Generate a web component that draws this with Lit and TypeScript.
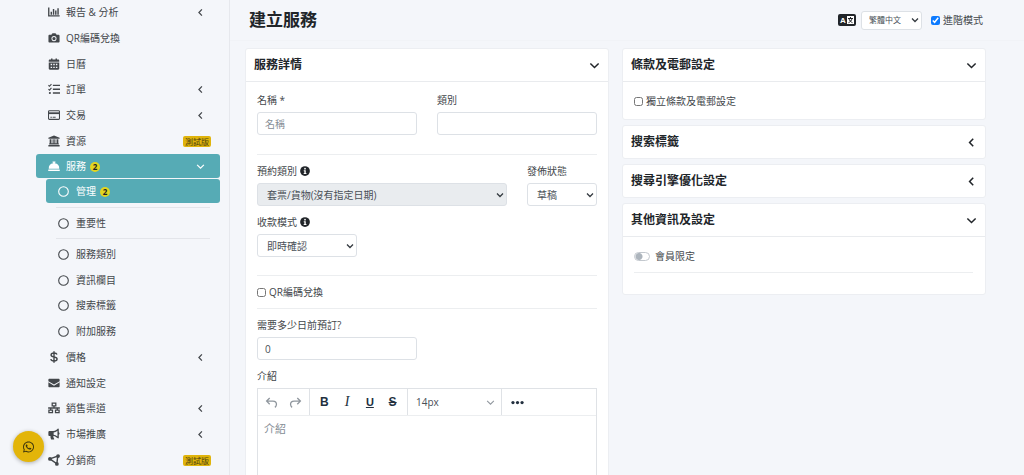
import { LitElement, html, svg, css, nothing } from "lit";
import { customElement, property, state } from "lit/decorators.js";

const icons: Record<string, unknown> = {
  chart: svg`<path d="M1 2v11.2h14.5" fill="none" stroke="currentColor" stroke-width="1.8"/><path d="M4.4 7.5v4M7.4 4v7.5M10.4 6v5.5M13.4 3v8.5" stroke="currentColor" stroke-width="1.9"/>`,
  camera: svg`<path fill-rule="evenodd" d="M2 3.8h2.6l.7-1.5c.2-.5.6-.8 1.1-.8h3.2c.5 0 .9.3 1.1.8l.7 1.5H14c.8 0 1.4.6 1.4 1.4v7.4c0 .8-.6 1.4-1.4 1.4H2c-.8 0-1.4-.6-1.4-1.4V5.2c0-.8.6-1.4 1.4-1.4zM8 5.4a3.4 3.4 0 1 0 0 6.8 3.4 3.4 0 0 0 0-6.8zm0 1.2a2.2 2.2 0 1 1 0 4.4 2.2 2.2 0 0 1 0-4.4z"/>`,
  calendar: svg`<path fill-rule="evenodd" d="M4 .5h2V2h4V.5h2V2h1.6c.8 0 1.4.6 1.4 1.4V5H1V3.4C1 2.6 1.6 2 2.4 2H4zM1 6h14v8.1c0 .8-.6 1.4-1.4 1.4H2.4c-.8 0-1.4-.6-1.4-1.4zm2.5 1.8v1.9h2V7.8zm3.5 0v1.9h2V7.8zm3.5 0v1.9h2V7.8zm-7 3.7v1.9h2v-1.9zm3.5 0v1.9h2v-1.9zm3.5 0v1.9h2v-1.9z"/>`,
  tasks: svg`<path d="M.6 3 2 4.4 4.6 1.4M.6 8.2 2 9.6l2.6-3" fill="none" stroke="currentColor" stroke-width="1.5"/><circle cx="2.5" cy="13.3" r="1.4"/><path d="M6.5 3.2H16M6.5 8.3H16M6.5 13.3H16" stroke="currentColor" stroke-width="1.8"/>`,
  card: svg`<rect x=".7" y="2.2" width="14.6" height="11.6" rx="1.2" fill="none" stroke="currentColor" stroke-width="1.4"/><path d="M1 5.6h14" stroke="currentColor" stroke-width="2.4"/><path d="M3.2 11h2M6.2 11h4" stroke="currentColor" stroke-width="1.3"/>`,
  bank: svg`<path d="M8 .6 15.5 3.5v1.4H.5V3.500zM2.200 5.600h2.400v5.400h1.500V5.600h3.800v5.400h1.500V5.600h2.400v5.400c.4 0 .7.300.7.700v1.100H1.500v-1.100c0-.4.300-.7.700-.7zM7.600 5.600v5.400h.8V5.600zM.5 13.400h15v1.900H.5z" fill-rule="evenodd"/>`,
  bell: svg`<path d="M.8 12.6h14.4c.4 0 .6.3.6.6v.7c0 .4-.3.6-.6.6H.8a.6.6 0 0 1-.6-.6v-.7c0-.3.2-.6.6-.6zM9 4.3V3.5h.5c.3 0 .5-.2.5-.5v-.5c0-.3-.2-.5-.5-.5h-3c-.3 0-.5.2-.5.5V3c0 .3.2.5.5.5H7v.8a7 7 0 0 0-6 7.2h14a7 7 0 0 0-6-7.2z"/>`,
  dollar: svg`<path d="M12 4.8C11.5 3.3 10 2.7 8 2.7c-2.3 0-3.9 1-3.9 2.6C4.1 9 12.1 7 12.1 10.7c0 1.7-1.7 2.7-4.1 2.7-2.2 0-3.9-.8-4.3-2.5M8 .3v15.4" fill="none" stroke="currentColor" stroke-width="1.9"/>`,
  mail: svg`<path d="M.5 5.5V3.8c0-.8.6-1.4 1.4-1.4h12.2c.8 0 1.4.6 1.4 1.4v1.7L8 10zM.5 7 8 11.6 15.5 7v5.3c0 .8-.6 1.4-1.4 1.4H1.9c-.8 0-1.4-.6-1.4-1.4z"/>`,
  network: svg`<path d="M5.6 1.5h4.8v3.6H5.6zM1.2 10.7H6v3.6H1.2zM10 10.7h4.8v3.6H10zM8 5v3M.2 8h15.6M3.6 8v2.5M12.4 8v2.5" fill="none" stroke="currentColor" stroke-width="1.7"/>`,
  horn: svg`<path fill-rule="evenodd" d="M13.5.8c.5 0 .9.4.9.9v4a1.9 1.9 0 0 1 0 3.4v4c0 .7-.8 1.2-1.4.7l-2-1.5a6.5 6.5 0 0 0-4-1.5c0 1.5.5 2.5 1.2 3.6.3.5 0 1-.6 1H4.8c-.3 0-.6-.2-.8-.5-.6-1.3-.9-2.700-.7-4.100H2.100C1.200 10.800.5 10.100.5 9.200V5.700c0-.9.7-1.600 1.600-1.600H7a6.500 6.500 0 0 0 4-1.500l2-1.600c.1-.1.3-.2.5-.2zM12.600 3.600 12.200 4A8.300 8.300 0 0 1 7.500 5.900v3.200a8.300 8.300 0 0 1 4.700 1.800l.4.300z"/>`,
  nodes: svg`<path d="M2.5 6.5 13 2.8 11.8 13z" fill="none" stroke="currentColor" stroke-width="1.9"/><circle cx="2.6" cy="6.6" r="2.5"/><circle cx="13.4" cy="2.8" r="2.5"/><circle cx="11.8" cy="13.3" r="2.5"/>`,
  circle: svg`<circle cx="8" cy="8" r="7" fill="none" stroke="currentColor" stroke-width="1.6"/>`,
  left: svg`<path d="M10.5 2.500 5.200 8l5.300 5.500" fill="none" stroke="currentColor" stroke-width="2.200"/>`,
  down: svg`<path d="M2 5.2 8 11l6-5.8" fill="none" stroke="currentColor" stroke-width="2.2"/>`,
  info: svg`<circle cx="8" cy="8" r="7.8"/><circle cx="8" cy="4.3" r="1.4" fill="#fff"/><path d="M6 6.8h3.2v4.4H10.3v1.5H5.9v-1.5H7V8.3H6z" fill="#fff"/>`,
  undo: svg`<path d="M5.8 2.5 2 6.3l3.8 3.8M2.2 6.3h7.600c2.700 0 4.300 1.700 4.300 4 0 1.500-.8 2.900-1.900 3.700" fill="none" stroke="currentColor" stroke-width="1.600"/>`,
  redo: svg`<path d="M10.200 2.500 14 6.300l-3.800 3.800M13.800 6.300H6.200c-2.700 0-4.300 1.700-4.300 4 0 1.500.8 2.900 1.900 3.700" fill="none" stroke="currentColor" stroke-width="1.600"/>`,
  thin: svg`<path d="M2 5 8 11l6-6" fill="none" stroke="currentColor" stroke-width="1.8"/>`,
  more: svg`<circle cx="2.4" cy="8" r="2"/><circle cx="8" cy="8" r="2"/><circle cx="13.6" cy="8" r="2"/>`,
};
const icon = (name: string, cls = "") =>
  html`<svg class="icon ${cls}" viewBox="0 0 16 16" fill="currentColor" aria-hidden="true">${icons[name]}</svg>`;

const shared = css`
  :host { font: 10px/16px "Open Sans", "Noto Sans CJK TC", sans-serif; color: #43474b; }
  *, *::before, *::after { box-sizing: border-box; }
  button, input, select, textarea { font: inherit; color: inherit; margin: 0; }
  .icon { width: 11px; height: 11px; flex: none; display: block; }
`;

interface Item { icon: string; text: string; more?: boolean; beta?: boolean; count?: number; active?: boolean; sub?: (Item | null)[] }

const menu: Item[] = [
  { icon: "chart", text: "報告 & 分析", more: true },
  { icon: "camera", text: "QR編碼兌換" },
  { icon: "calendar", text: "日曆" },
  { icon: "tasks", text: "訂單", more: true },
  { icon: "card", text: "交易", more: true },
  { icon: "bank", text: "資源", beta: true },
  {
    icon: "bell", text: "服務", count: 2, active: true,
    sub: [
      { icon: "circle", text: "管理", count: 2, active: true },
      null,
      { icon: "circle", text: "重要性" },
      null,
      { icon: "circle", text: "服務類別" },
      { icon: "circle", text: "資訊欄目" },
      { icon: "circle", text: "搜索標籤" },
      { icon: "circle", text: "附加服務" },
    ],
  },
  { icon: "dollar", text: "價格", more: true },
  { icon: "mail", text: "通知設定" },
  { icon: "network", text: "銷售渠道", more: true },
  { icon: "horn", text: "市場推廣", more: true },
  { icon: "nodes", text: "分銷商", beta: true },
];

@customElement("side-nav")
export class SideNav extends LitElement {
  static styles = [shared, css`
    :host { display: block; border-right: 1px solid #e6e8ed; padding: 0 9px 0 36px; overflow: hidden; }
    ul { list-style: none; margin: 0; padding: 0; display: flex; flex-direction: column; }
    li { margin-bottom: 2px; }
    li:nth-child(3n) { margin-bottom: 1px; }
    .sub { margin: 1px 0 0 10px; }
    .sub li:last-child { margin-bottom: 0; }
    .sub .divider { border-top: 1px solid #e3e5ea; margin: 2px 10px 3px; }
    .link { display: flex; align-items: center; height: 24px; padding: 0 9px 0 12px; border-radius: 3px; color: inherit; text-decoration: none; white-space: nowrap; }
    .link .lead { width: 12px; height: 12px; margin-right: 6px; }
    .sub .link .lead { width: 11px; height: 11px; margin-right: 7px; }
    .link.active { background: #56abb5; color: #fff; }
    .count { width: 10px; height: 10px; margin: 2px 0 0 4px; border-radius: 5px; background: #e3d51f; color: #222; font-weight: 700; font-size: 8px; line-height: 10px; text-align: center; }
    .arrow { width: 9px; height: 9px; margin: 0 6px 0 auto; }
    .beta { margin-left: auto; height: 11px; padding: 0 2px; border-radius: 2px; background: #e0b40c; color: #4b3f10; font-size: 8px; line-height: 11px; }
  `];
  private item(i: Item | null): unknown {
    if (!i) return html`<li class="divider" role="separator"></li>`;
    return html`<li>
      <a class="link ${i.active ? "active" : ""}" href="#">
        ${icon(i.icon, "lead")}<span>${i.text}</span>
        ${i.count ? html`<span class="count">${i.count}</span>` : nothing}
        ${i.beta ? html`<span class="beta">測試版</span>` : nothing}
        ${i.more ? icon("left", "arrow") : i.sub ? icon("down", "arrow") : nothing}
      </a>
      ${i.sub ? html`<ul class="sub">${i.sub.map((s) => this.item(s))}</ul>` : nothing}
    </li>`;
  }
  render() {
    return html`<nav><ul>${menu.map((i) => this.item(i))}</ul></nav>`;
  }
}

@customElement("panel-card")
export class PanelCard extends LitElement {
  @property() heading = "";
  @property({ type: Boolean }) open = false;
  static styles = [shared, css`
    :host { display: block; background: #fff; border: 1px solid #eceef2; border-radius: 3px; }
    h2 { margin: 0; font: inherit; }
    .head { display: flex; align-items: center; justify-content: space-between; width: 100%; height: 32px; padding: 0 8px; border: 0; background: none; color: #212529; font-size: 12px; font-weight: 700; text-align: left; }
    .open { height: 33px; border-bottom: 1px solid #e9ebee; }
  `];
  render() {
    return html`<h2><button class="head ${this.open ? "open" : ""}" aria-expanded=${this.open} @click=${() => (this.open = !this.open)}>
        <span>${this.heading}</span>${icon(this.open ? "down" : "left")}
      </button></h2>
      ${this.open ? html`<slot></slot>` : nothing}`;
  }
}

@customElement("app-root")
export class AppRoot extends LitElement {
  @state() private advanced = true;
  static styles = [shared, css`
    :host { display: grid; grid-template-columns: 230px minmax(0, 1fr); height: 100vh; overflow: hidden; background: #f4f6fa; }
    main { overflow-y: auto; scrollbar-width: none; }
    .top { display: flex; align-items: center; height: 41px; padding: 0 41px 0 19px; border-bottom: 1px solid #f1f3f7; }
    h1 { margin: 0 auto 0 0; font-size: 17px; line-height: 24px; font-weight: 700; color: #212529; }
    .lang { width: 18px; height: 12px; margin-right: 5px; }
    .columns { display: grid; grid-template-columns: 1fr 1fr; gap: 13px; align-items: start; padding: 7px 38px 20px 15px; }
    .stack { display: flex; flex-direction: column; gap: 5px; }
    .body { padding: 10px 11px; }
    .side { padding: 11px 12px 10px 11px; }
    .row { display: grid; grid-template-columns: 1fr 1fr; gap: 20px; margin-bottom: 19px; }
    .booking { grid-template-columns: 1fr 70px; margin-bottom: 8px; }
    .field { display: flex; flex-direction: column; align-items: flex-start; gap: 4px; }
    .last { margin-bottom: 18px; }
    .days { width: calc(50% - 10px); margin-bottom: 8px; }
    label { display: flex; align-items: center; gap: 3px; }
    .field .icon { width: 10px; height: 10px; color: #212529; display: inline-block; }
    .control { width: 100%; height: 23px; padding: 0 7px; border: 1px solid #dde1e6; border-radius: 3px; background-color: #fff; color: #495057; outline: none; }
    .control::placeholder, .area::placeholder { color: #868e96; opacity: 1; }
    select.control { appearance: none; padding: 0 16px 0 9px; background-image: url("data:image/svg+xml,%3Csvg xmlns='http://www.w3.org/2000/svg' viewBox='0 0 8 8'%3E%3Cpath d='M1 2.500 4 5.500 7 2.500' fill='none' stroke='%23343a40' stroke-width='1.300'/%3E%3C/svg%3E"); background-repeat: no-repeat; background-size: 8px 8px; background-position: right 2px center; }
    select.control:disabled { background-color: #e9ecef; opacity: 1; }
    select.pay { width: 100px; }
    select.locale { width: 61px; height: 19px; padding: 0 14px 0 7px; margin-right: 9px; font-size: 8px; line-height: 16px; }
    hr { border: 0; border-top: 1px solid #eceef0; margin: 0 0 8px; }
    .check { margin-bottom: 8px; }
    .solo { margin-bottom: 0; }
    .spaced { margin-bottom: 11px; }
    .check input, .top label input { width: 9px; height: 9px; accent-color: #0d7bff; }
    .check input.switch { appearance: none; width: 16px; height: 9px; margin-right: 2px; border: 1px solid #c3c8ce; border-radius: 5px; background: radial-gradient(circle at 4px 50%, #adb5bd 3px, #fff 4px); }
    .switch:checked { transform: scaleX(-1); }
    .editor { width: 100%; border: 1px solid #dfe2e6; }
    .tools { display: flex; height: 27px; border-bottom: 1px solid #eceef0; color: #222f3e; }
    .group { display: flex; align-items: center; justify-content: space-around; width: 98px; padding: 0 3px; border-right: 1px solid #dfe2e6; }
    .history { width: 52px; padding: 0 1px; }
    .size { width: 94px; padding: 0; }
    .extra { width: 30px; padding: 0; border: 0; }
    .tools button { display: flex; align-items: center; justify-content: center; width: 20px; height: 22px; padding: 0; border: 0; background: none; font-size: 12px; font-weight: 700; font-family: "Liberation Sans", Arial, sans-serif; }
    .tools .icon { width: 13px; height: 13px; color: inherit; }
    .tools .history .icon { color: #8f969d; }
    .tools .italic { font-family: "Liberation Serif", serif; font-style: italic; font-weight: 400; font-size: 14px; }
    .tools .under { text-decoration: underline; font-size: 11px; }
    .tools .strike { text-decoration: line-through; }
    .tools .px { width: 100%; justify-content: space-between; padding: 0 6px 0 8px; font: inherit; color: #495057; }
    .tools .px .icon { width: 9px; height: 9px; color: #8f969d; }
    .area { display: block; width: 100%; height: 180px; border: 0; padding: 5px 6px; font-size: 11px; outline: none; resize: none; }
    .chat { position: fixed; left: 13px; bottom: 13px; display: grid; place-items: center; width: 31px; height: 31px; border-radius: 50%; background: #e3b50a; color: #3a340f; box-shadow: 0 1px 4px rgba(0, 0, 0, .3); }
    .chat svg { width: 11px; height: 12px; display: block; }
  `];
  render() {
    return html`
      <side-nav></side-nav>
      <main>
        <header class="top">
          <h1>建立服務</h1>
          <svg class="lang" viewBox="0 0 18 12" aria-hidden="true">
            <rect width="18" height="12" rx="2" fill="#212529"/>
            <rect x="9" y="2" width="7" height="8" fill="#fff"/>
            <path d="M10 4.500h5M12.500 3v1.500M14 4.500c-.4 2-1.600 3.300-3.500 4.200M11 4.500c.4 2 1.600 3.300 3.500 4.200" fill="none" stroke="#212529"/>
            <text x="2" y="9" fill="#fff" font-family="Liberation Sans" font-weight="700" font-size="8">A</text>
          </svg>
          <select class="control locale" aria-label="語言"><option>繁體中文</option></select>
          <label><input type="checkbox" .checked=${this.advanced} @change=${() => (this.advanced = !this.advanced)}>進階模式</label>
        </header>
        <div class="columns">
          <panel-card heading="服務詳情" open>
            <div class="body">
              <div class="row">
                <div class="field"><label for="name">名稱 *</label><input class="control" id="name" placeholder="名稱"></div>
                <div class="field"><label for="kind">類別</label><input class="control" id="kind"></div>
              </div>
              <hr>
              <div class="row booking">
                <div class="field"><label for="booking">預約類別 ${icon("info")}</label>
                  <select class="control" id="booking" disabled><option>套票/貨物(沒有指定日期)</option></select></div>
                <div class="field"><label for="status">發佈狀態</label>
                  <select class="control" id="status"><option>草稿</option></select></div>
              </div>
              <div class="field last"><label for="pay">收款模式 ${icon("info")}</label>
                <select class="control pay" id="pay"><option>即時確認</option></select></div>
              <hr>
              <label class="check"><input type="checkbox">QR編碼兌換</label>
              <hr>
              <div class="field days"><label for="days">需要多少日前預訂?</label><input class="control" id="days" value="0"></div>
              <div class="field"><label for="intro">介紹</label>
                <div class="editor">
                  <div class="tools">
                    <div class="group history"><button aria-label="復原">${icon("undo")}</button><button aria-label="重做">${icon("redo")}</button></div>
                    <div class="group"><button>B</button><button class="italic">I</button><button class="under">U</button><button class="strike">S</button></div>
                    <div class="group size"><button class="px"><span>14px</span>${icon("thin")}</button></div>
                    <div class="group extra"><button aria-label="更多">${icon("more")}</button></div>
                  </div>
                  <textarea class="area" id="intro" placeholder="介紹"></textarea>
                </div></div>
            </div>
          </panel-card>
          <div class="stack">
            <panel-card heading="條款及電郵設定" open>
              <div class="side"><label class="check solo"><input type="checkbox">獨立條款及電郵設定</label></div>
            </panel-card>
            <panel-card heading="搜索標籤"></panel-card>
            <panel-card heading="搜尋引擎優化設定"></panel-card>
            <panel-card heading="其他資訊及設定" open>
              <div class="side"><label class="check"><input class="switch" type="checkbox" role="switch">會員限定</label><hr class="spaced"></div>
            </panel-card>
          </div>
        </div>
      </main>
      <a class="chat" href="#" aria-label="WhatsApp"><svg viewBox="0 32 448 448" fill="currentColor"><path d="M380.9 97.1C339 55.1 283.2 32 223.9 32c-122.4 0-222 99.6-222 222 0 39.1 10.2 77.3 29.6 111L0 480l117.7-30.9c32.4 17.7 68.9 27 106.1 27h.1c122.3 0 224.1-99.6 224.1-222 0-59.3-25.2-115-67.1-157zm-157 341.6c-33.2 0-65.7-8.9-94-25.7l-6.7-4-69.8 18.3L72 359.2l-4.4-7c-18.5-29.4-28.2-63.3-28.2-98.2 0-101.7 82.8-184.5 184.6-184.5 49.3 0 95.6 19.2 130.4 54.1 34.8 34.9 56.2 81.2 56.1 130.5 0 101.8-84.9 184.6-186.6 184.6zm101.2-138.2c-5.5-2.8-32.8-16.2-37.9-18-5.1-1.9-8.8-2.8-12.5 2.8-3.7 5.6-14.3 18-17.6 21.8-3.2 3.7-6.5 4.2-12 1.4-32.6-16.3-54-29.1-75.5-66-5.7-9.8 5.7-9.1 16.3-30.3 1.8-3.7.9-6.9-.5-9.7-1.4-2.8-12.5-30.1-17.1-41.2-4.5-10.8-9.1-9.3-12.5-9.5-3.2-.2-6.9-.2-10.6-.2-3.7 0-9.7 1.4-14.8 6.9-5.1 5.6-19.4 19-19.4 46.3 0 27.3 19.9 53.7 22.6 57.4 2.8 3.7 39.1 59.7 94.8 83.8 35.2 15.2 49 16.5 66.6 13.9 10.7-1.6 32.8-13.4 37.4-26.4 4.6-13 4.6-24.1 3.2-26.4-1.3-2.5-5-3.9-10.5-6.6z"/></svg></a>
    `;
  }
}
